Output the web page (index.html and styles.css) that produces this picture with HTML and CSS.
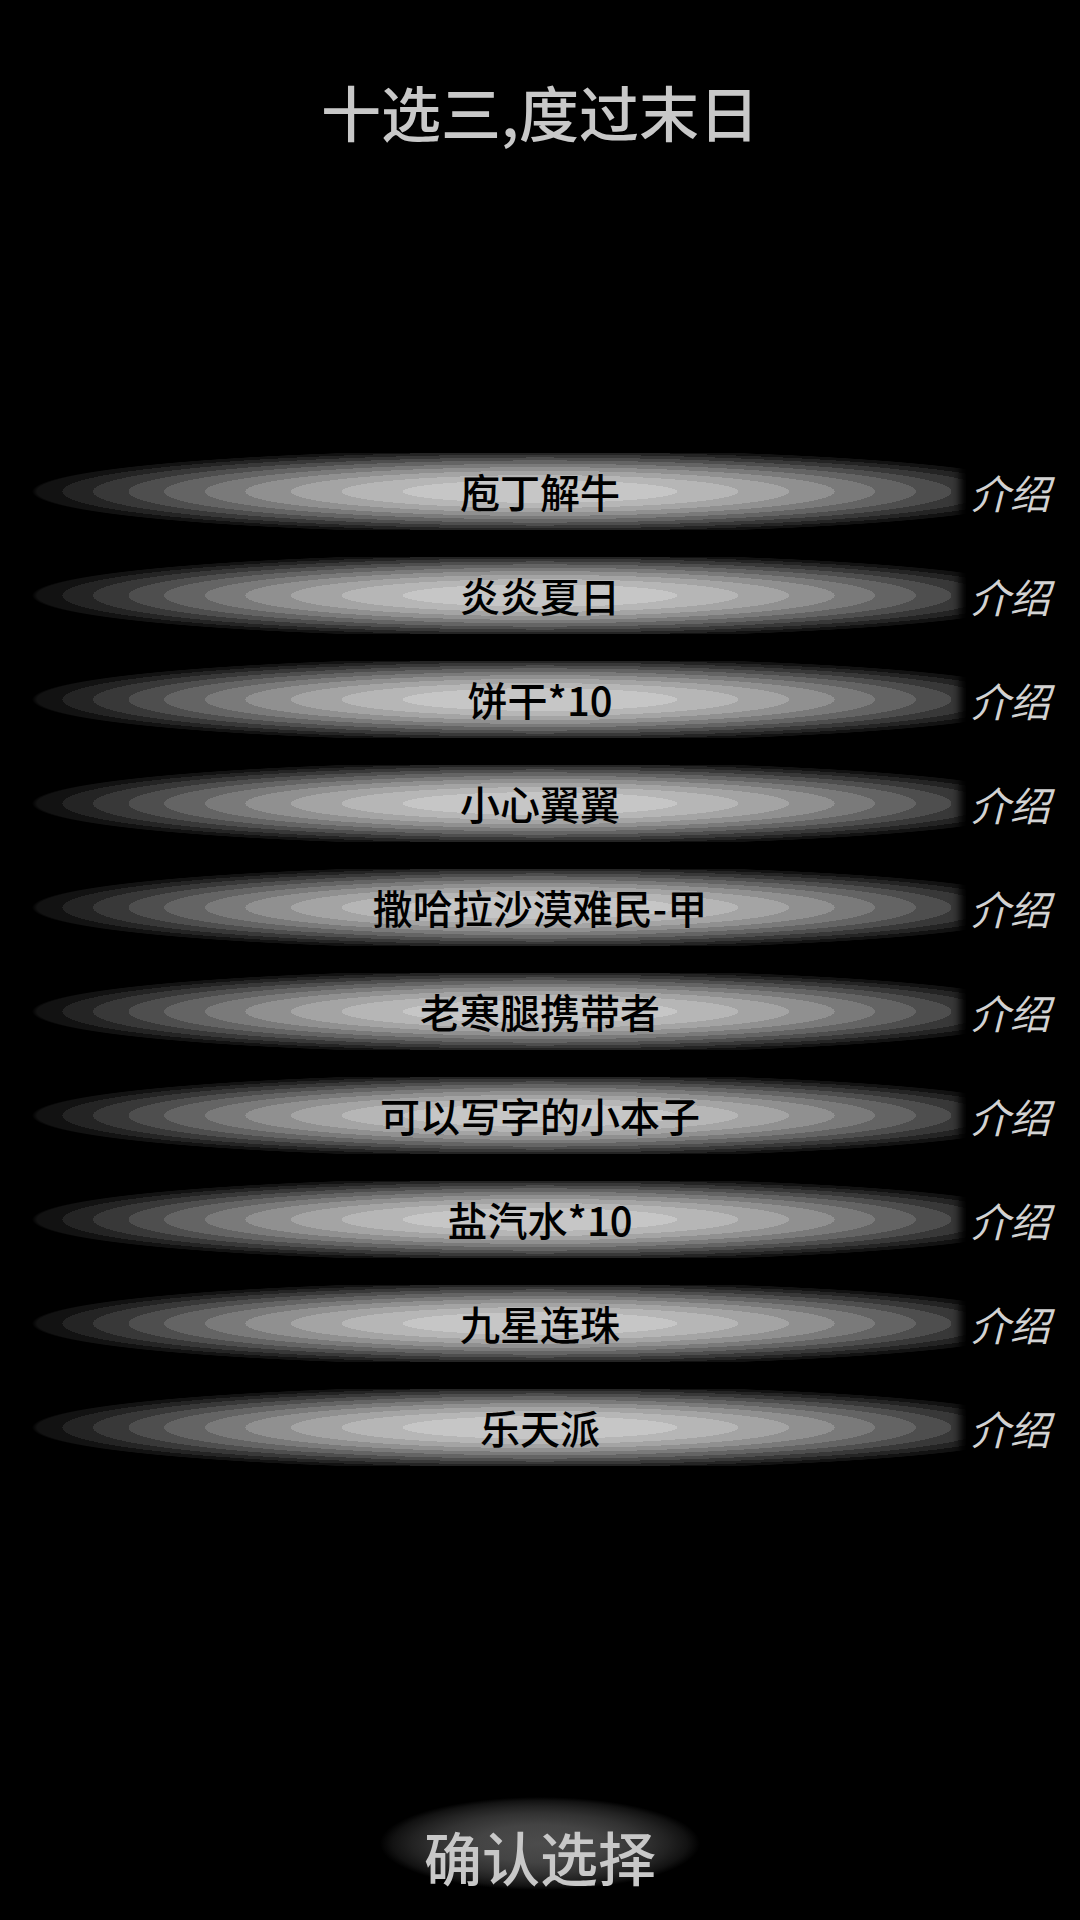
FILE: index.html
```html
<!DOCTYPE html>
<html lang="zh-CN">
<head>
<meta charset="utf-8">
<title>十选三,度过末日</title>
<link rel="stylesheet" href="styles.css">
</head>
<body>
<div class="page">
  <h1 class="title">十选三,度过末日</h1>
  <ul class="choices">
    <li class="choice"><span class="choice-name">庖丁解牛</span><span class="choice-info">介绍</span></li>
    <li class="choice"><span class="choice-name">炎炎夏日</span><span class="choice-info">介绍</span></li>
    <li class="choice"><span class="choice-name">饼干*10</span><span class="choice-info">介绍</span></li>
    <li class="choice"><span class="choice-name">小心翼翼</span><span class="choice-info">介绍</span></li>
    <li class="choice"><span class="choice-name">撒哈拉沙漠难民-甲</span><span class="choice-info">介绍</span></li>
    <li class="choice"><span class="choice-name">老寒腿携带者</span><span class="choice-info">介绍</span></li>
    <li class="choice"><span class="choice-name">可以写字的小本子</span><span class="choice-info">介绍</span></li>
    <li class="choice"><span class="choice-name">盐汽水*10</span><span class="choice-info">介绍</span></li>
    <li class="choice"><span class="choice-name">九星连珠</span><span class="choice-info">介绍</span></li>
    <li class="choice"><span class="choice-name">乐天派</span><span class="choice-info">介绍</span></li>
  </ul>
  <div class="confirm-wrap">
    <div class="confirm">确认选择</div>
  </div>
</div>
</body>
</html>
```

FILE: styles.css
```css
html, body {
  margin: 0;
  padding: 0;
  background: #000;
}

body {
  font-family: "Noto Sans CJK SC", "Noto Sans", sans-serif;
}

.page {
  width: 1080px;
  height: 1920px;
  display: flex;
  flex-direction: column;
  overflow: hidden;
}

.title {
  margin: 0;
  padding-top: 71px;
  height: 80px;
  line-height: 80px;
  font-size: 60px;
  font-weight: 500;
  color: #c8c8c8;
  text-align: center;
}

.choices {
  list-style: none;
  margin: 302px 0 0 0;
  padding: 0;
  display: flex;
  flex-direction: column;
  gap: 27px;
}

.choice {
  position: relative;
  height: 77px;
  margin: 0 32px;
  display: flex;
  justify-content: center;
  align-items: center;
  background: radial-gradient(508px 42px at 50% 50%,
    #c6c6c6 0%, #c6c6c6 27%,
    #b6b6b6 27%, #b6b6b6 39%,
    #a4a4a4 39%, #a4a4a4 49%,
    #909090 49%, #909090 58%,
    #7a7a7a 58%, #7a7a7a 66%,
    #646464 66%, #646464 74%,
    #4e4e4e 74%, #4e4e4e 81%,
    #383838 81%, #383838 88%,
    #242424 88%, #242424 94%,
    #121212 94%, #121212 99%,
    #000 100%);
}

.choice-name {
  font-size: 40px;
  font-weight: 500;
  line-height: 77px;
  color: #000;
  white-space: nowrap;
}

.choice-info {
  position: absolute;
  top: -6px;
  bottom: -6px;
  right: -32px;
  width: 114px;
  display: flex;
  align-items: center;
  padding-left: 4px;
  box-sizing: border-box;
  background: #000;
  box-shadow: -6px 0 8px 0 #000;
  font-size: 40px;
  font-weight: 400;
  font-style: italic;
  color: #d2d2d2;
}

.confirm-wrap {
  margin-top: 331px;
  display: flex;
  justify-content: center;
}

.confirm {
  width: 320px;
  height: 93px;
  box-sizing: border-box;
  padding-top: 30px;
  line-height: 58px;
  font-size: 58px;
  font-weight: 500;
  color: #c8c8c8;
  text-align: center;
  background: radial-gradient(ellipse closest-side at 50% 50%,
    #4c4c4c 0%, #444 40%, #323232 65%, #222 80%, #121212 92%, #000 100%);
}
```
